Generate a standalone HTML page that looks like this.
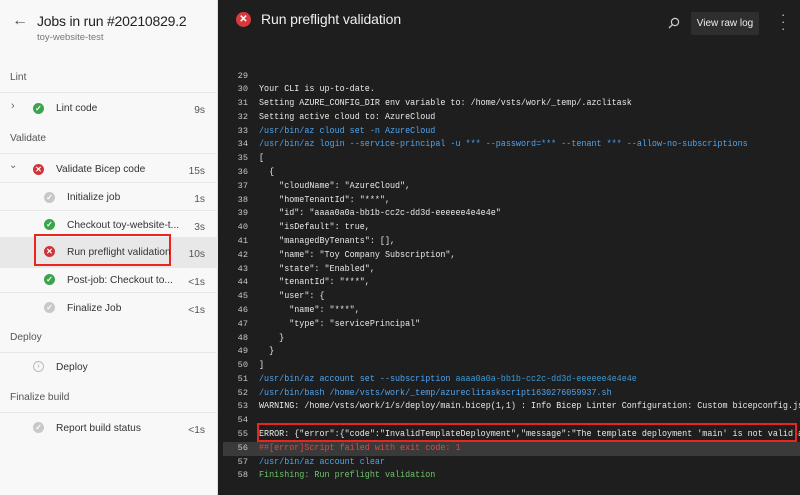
<!DOCTYPE html>
<html><head><style>
*{margin:0;padding:0;box-sizing:border-box}
body{width:800px;height:495px;overflow:hidden;font-family:"Liberation Sans",sans-serif;position:relative;background:#1e1e1e}
#left{position:absolute;left:0;top:0;width:218px;height:495px;background:#f8f8f8;border-right:1px solid #ddd}
.a{position:absolute;white-space:nowrap}
.t{font-size:10.2px;color:#333}
.h{font-size:10.2px;color:#555}
.d{font-size:10.2px;color:#555;right:12px}
.sep{position:absolute;left:0;width:218px;height:1px;background:#e8e8e8}
.ic{position:absolute;width:11px;height:11px;border-radius:50%;color:#fff;font-size:8px;line-height:11px;text-align:center;font-weight:bold}
.g{background:#3aa54a}.r{background:#d13438}.gr{background:#c8c8c8}
#right{position:absolute;left:218px;top:0;width:582px;height:495px;background:#1e1e1e}
.ln{position:absolute;left:0;width:30px;text-align:right;font-family:"Liberation Mono",monospace;font-size:8.6px;color:#c8c8c8}
.lt{position:absolute;left:41px;font-family:"Liberation Mono",monospace;font-size:9.6px;color:#e8e8e8;white-space:pre;transform:scaleX(0.875);transform-origin:0 0}
.b{color:#4ea5f0}.rd{color:#e04848}.gn{color:#6cc46c}
</style></head><body>
<div id="left">
<div class="a" style="left:12px;top:12px;font-size:16px;color:#555">&#8592;</div>
<div class="a" style="left:37px;top:13px;font-size:14px;letter-spacing:-0.2px;color:#222">Jobs in run #20210829.2</div>
<div class="a" style="left:37px;top:32px;font-size:9.5px;color:#777">toy-website-test</div>
<div class="a h" style="left:10px;top:72px">Lint</div>
<div class="sep" style="top:92px"></div>
<div class="a" style="left:11px;top:100px;font-size:11px;color:#666">&#8250;</div>
<div class="ic g" style="left:33px;top:103px">&#10003;</div>
<div class="a t" style="left:56px;top:103px">Lint code</div>
<div class="a d" style="top:105px">9s</div>
<div class="a h" style="left:10px;top:133px">Validate</div>
<div class="sep" style="top:153px"></div>
<div class="a" style="left:9px;top:160px;font-size:10px;color:#666">&#8964;</div>
<div class="ic r" style="left:33px;top:164px">&#10005;</div>
<div class="a t" style="left:56px;top:164px">Validate Bicep code</div>
<div class="a d" style="top:166px">15s</div>
<div class="sep" style="top:182px"></div>
<div class="ic gr" style="left:44px;top:192px">&#10003;</div>
<div class="a t" style="left:67px;top:192px">Initialize job</div>
<div class="a d" style="top:194px">1s</div>
<div class="sep" style="top:210px"></div>
<div class="ic g" style="left:44px;top:219px">&#10003;</div>
<div class="a t" style="left:67px;top:220px">Checkout toy-website-t...</div>
<div class="a d" style="top:222px">3s</div>
<div style="position:absolute;left:0;top:237px;width:218px;height:31px;background:#e8e8e8"></div>
<div style="position:absolute;left:34px;top:234px;width:137px;height:32px;border:2.5px solid #e8261f"></div>
<div class="ic r" style="left:44px;top:246px">&#10005;</div>
<div class="a t" style="left:67px;top:247px">Run preflight validation</div>
<div class="a d" style="top:249px">10s</div>
<div class="ic g" style="left:44px;top:274px">&#10003;</div>
<div class="a t" style="left:67px;top:275px">Post-job: Checkout to...</div>
<div class="a d" style="top:277px">&lt;1s</div>
<div class="sep" style="top:292px"></div>
<div class="ic gr" style="left:44px;top:302px">&#10003;</div>
<div class="a t" style="left:67px;top:303px">Finalize Job</div>
<div class="a d" style="top:305px">&lt;1s</div>
<div class="a h" style="left:10px;top:332px">Deploy</div>
<div class="sep" style="top:352px"></div>
<div style="position:absolute;left:33px;top:361px;width:11px;height:11px;border:1px solid #bbb;border-radius:50%;font-size:7px;line-height:9px;text-align:center;color:#999">&#8250;</div>
<div class="a t" style="left:56px;top:362px">Deploy</div>
<div class="a h" style="left:10px;top:392px">Finalize build</div>
<div class="sep" style="top:412px"></div>
<div class="ic gr" style="left:33px;top:422px">&#10003;</div>
<div class="a t" style="left:56px;top:423px">Report build status</div>
<div class="a d" style="top:425px">&lt;1s</div>
</div>
<div id="right">
<div style="position:absolute;left:18px;top:12px;width:15px;height:15px;border-radius:50%;background:#d9393c;color:#fff;font-size:10px;line-height:15px;text-align:center;font-weight:bold">&#10005;</div>
<div class="a" style="left:43px;top:11px;font-size:14px;letter-spacing:-0.1px;color:#f0f0f0">Run preflight validation</div>
<svg style="position:absolute;left:450px;top:17px" width="12" height="12" viewBox="0 0 12 12"><circle cx="7" cy="5" r="3.6" fill="none" stroke="#ccc" stroke-width="1.2"/><line x1="4.4" y1="7.6" x2="1" y2="11" stroke="#ccc" stroke-width="1.3"/></svg>
<div style="position:absolute;left:473px;top:12px;width:68px;height:23px;background:#2e2e2e;border-radius:2px;color:#eee;font-size:10px;line-height:23px;text-align:center">View raw log</div>
<div class="a" style="left:563px;top:11px;font-size:13px;color:#ccc;line-height:7px">&#183;<br>&#183;<br>&#183;</div>
<div style="position:absolute;left:5px;top:442px;width:577px;height:14px;background:#3a3a3a"></div>
<div style="position:absolute;left:39px;top:423px;width:540px;height:19px;border:2.5px solid #e8261f"></div>
<div id="log"></div>
</div>
<script>
var L=[
[28,''],[29,''],[30,'Your CLI is up-to-date.'],
[31,'Setting AZURE_CONFIG_DIR env variable to: /home/vsts/work/_temp/.azclitask'],
[32,'Setting active cloud to: AzureCloud'],
[33,'<span class="b">/usr/bin/az cloud set -n AzureCloud</span>'],
[34,'<span class="b">/usr/bin/az login --service-principal -u *** --password=*** --tenant *** --allow-no-subscriptions</span>'],
[35,'['],[36,'  {'],
[37,'    "cloudName": "AzureCloud",'],
[38,'    "homeTenantId": "***",'],
[39,'    "id": "aaaa0a0a-bb1b-cc2c-dd3d-eeeeee4e4e4e"'],
[40,'    "isDefault": true,'],
[41,'    "managedByTenants": [],'],
[42,'    "name": "Toy Company Subscription",'],
[43,'    "state": "Enabled",'],
[44,'    "tenantId": "***",'],
[45,'    "user": {'],
[46,'      "name": "***",'],
[47,'      "type": "servicePrincipal"'],
[48,'    }'],[49,'  }'],[50,']'],
[51,'<span class="b">/usr/bin/az account set --subscription </span><span style="color:#3a9ad9">aaaa0a0a-bb1b-cc2c-dd3d-eeeeee4e4e4e</span>'],
[52,'<span class="b">/usr/bin/bash /home/vsts/work/_temp/azureclitaskscript1630276059937.sh</span>'],
[53,'WARNING: /home/vsts/work/1/s/deploy/main.bicep(1,1) : Info Bicep Linter Configuration: Custom bicepconfig.json'],
[54,''],
[55,'ERROR: {"error":{"code":"InvalidTemplateDeployment","message":"The template deployment \'main\' is not valid a'],
[56,'<span class="rd">##[error]Script failed with exit code: 1</span>'],
[57,'<span class="b">/usr/bin/az account clear</span>'],
[58,'<span class="gn">Finishing: Run preflight validation</span>']];
var h='';
L.forEach(function(l){var y=75+(l[0]-29)*13.79-5;
h+='<div class="ln" style="top:'+(y+0.5)+'px">'+(l[0]==28?'':l[0])+'</div><div class="lt" style="top:'+(y-0.5)+'px">'+l[1]+'</div>';});
document.getElementById('log').innerHTML=h;
</script>
</body></html>
